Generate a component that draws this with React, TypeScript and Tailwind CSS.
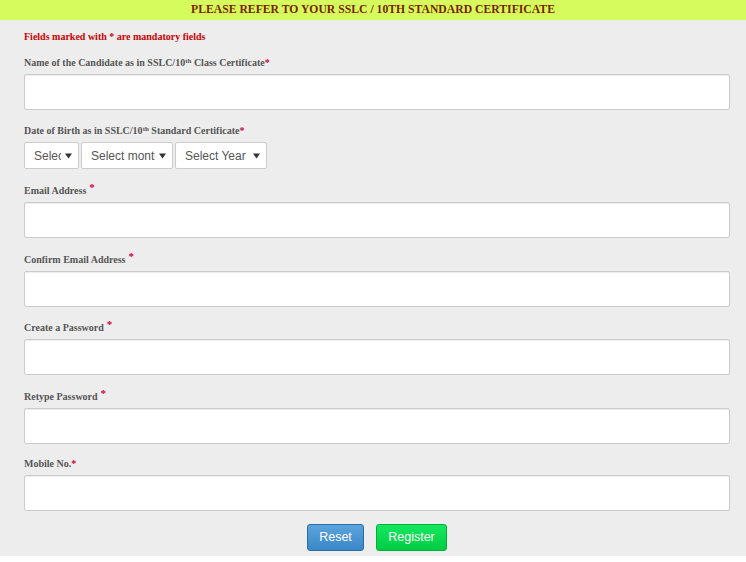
const labelCls =
  "block text-[10px] font-bold leading-[14px] h-[14px] text-[#555555] font-['Liberation_Serif',serif]";
const inputCls =
  "block w-full h-[36px] bg-white border border-[#cccccc] rounded-[2px] shadow-[inset_0_1px_1px_rgba(0,0,0,0.075)]";

function Star({ gap }: { gap?: boolean }) {
  return (
    <span
      className={`text-[#cc0033] ${gap ? "ml-[3px] relative top-[-3px] text-[11px]" : ""}`}
    >
      *
    </span>
  );
}

function Field({
  label,
  gap,
  mt = "mt-[14px]",
  mb = "mb-[5px]",
}: {
  label: React.ReactNode;
  gap?: boolean;
  mt?: string;
  mb?: string;
}) {
  return (
    <div className={mt}>
      <label className={`${labelCls} ${mb}`}>
        {label}
        <Star gap={gap} />
      </label>
      <div className={inputCls} />
    </div>
  );
}

function Select({ text, w }: { text: string; w: string }) {
  return (
    <div
      className={`${w} h-[27px] bg-white border border-[#cccccc] rounded-[2px] flex items-center pl-[9px] pr-[6px]`}
    >
      <span className="flex-1 min-w-0 overflow-hidden whitespace-nowrap text-[12px] text-[#555555] font-['Liberation_Sans',sans-serif]">
        {text}
      </span>
      <svg className="ml-[4px] shrink-0" width="7" height="6" viewBox="0 0 7 6">
        <path d="M0 0.5 L7 0.5 L3.5 5.5 Z" fill="#333333" />
      </svg>
    </div>
  );
}

export default function App() {
  return (
    <div className="w-[746px] h-[562px] bg-white overflow-hidden">
      <div className="bg-[#eeedee] h-[556px]">
        {/* Banner */}
        <div className="h-[20px] bg-[#d5fc5c] flex items-center justify-center">
          <span className="text-[11.7px] font-bold text-[#7a1e00] font-['Liberation_Serif',serif]">
            PLEASE REFER TO YOUR SSLC / 10TH STANDARD CERTIFICATE
          </span>
        </div>

        <div className="pl-[24px] pr-[16px]">
          <p className="mt-[10px] text-[10px] font-bold leading-[14px] text-[#cc0000] font-['Liberation_Serif',serif]">
            Fields marked with * are mandatory fields
          </p>

          <div className="mt-[12px]">
            <label className={`${labelCls} mb-[4px]`}>
              Name of the Candidate as in SSLC/10<sup className="text-[7px]">th</sup> Class Certificate
              <Star />
            </label>
            <div className={inputCls} />
          </div>

          <div className="mt-[14px]">
            <label className={`${labelCls} mb-[4px]`}>
              Date of Birth as in SSLC/10<sup className="text-[7px]">th</sup> Standard Certificate
              <Star />
            </label>
            <div className="flex gap-[2px]">
              <Select text="Select day" w="w-[55px]" />
              <Select text="Select month" w="w-[92px]" />
              <Select text="Select Year" w="w-[92px]" />
            </div>
          </div>

          <Field label="Email Address" gap />
          <Field label="Confirm Email Address" gap />
          <Field label="Create a Password" gap mt="mt-[13px]" />
          <Field label="Retype Password" gap />
          <Field label="Mobile No." mt="mt-[13px]" mb="mb-[4px]" />

          <div className="mt-[13px] flex justify-center gap-[12px]">
            <button className="w-[57px] h-[27px] rounded-[3px] border border-[#2d6ca2] bg-gradient-to-b from-[#5ba3dc] to-[#3a87c8] text-white text-[12.5px] font-['Liberation_Sans',sans-serif]">
              Reset
            </button>
            <button className="w-[71px] h-[27px] rounded-[3px] border border-[#00b03a] bg-gradient-to-b from-[#14e85f] to-[#00cc44] text-white text-[12.5px] font-['Liberation_Sans',sans-serif]">
              Register
            </button>
          </div>
        </div>
      </div>
    </div>
  );
}
